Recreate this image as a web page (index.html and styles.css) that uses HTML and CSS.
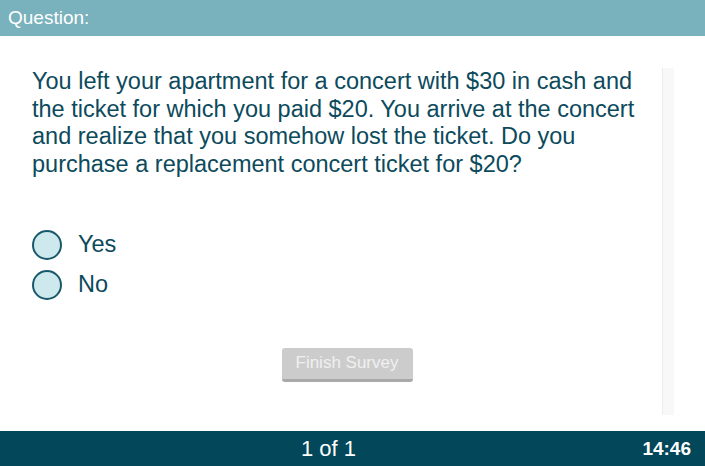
FILE: index.html
```html
<!DOCTYPE html>
<html lang="en">
<head>
<meta charset="UTF-8">
<meta name="viewport" content="width=device-width, initial-scale=1.0">
<title>Survey</title>
<link rel="stylesheet" href="styles.css">
</head>
<body>
	<header class="top-bar">
		<h1>Question:</h1>
	</header>

	<div id="main">
		<div class="content">
			<p class="question">You left your apartment for a concert with $30 in cash and the ticket for which you paid $20. You arrive at the concert and realize that you somehow lost the ticket. Do you purchase a replacement concert ticket for $20?</p>

			<div class="choices">
				<label class="choice">
					<span class="radio"></span>
					<span class="choice-text">Yes</span>
				</label>
				<label class="choice">
					<span class="radio"></span>
					<span class="choice-text">No</span>
				</label>
			</div>

			<div class="actions">
				<button type="button" class="finish" disabled>Finish Survey</button>
			</div>
		</div>
		<div class="scroll-track"></div>
	</div>

	<footer class="bottom-bar">
		<span class="progress">1 of 1</span>
		<span class="clock">14:46</span>
	</footer>
</body>
</html>
```

FILE: styles.css
```css
body {
	font-family: 'Liberation Sans', Arial, Helvetica, sans-serif;
	margin: 0;
	padding: 0;
	background-color: white;
	height: 466px;
	display: flex;
	flex-direction: column;
	overflow: hidden;
}

.top-bar {
	background-color: #79b1bd;
	height: 36px;
	display: flex;
	align-items: center;
	padding: 0 8px;
}

.top-bar h1 {
	margin: 0;
	color: white;
	font-size: 19px;
	font-weight: normal;
}

#main {
	flex: 1;
	display: flex;
	min-height: 0;
}

.content {
	flex: 1;
	padding: 32px 0 0 32px;
}

.question {
	margin: 0;
	width: 615px;
	font-size: 23.5px;
	line-height: 27.7px;
	color: #0c4a5c;
}

.choices {
	margin-top: 46px;
	display: flex;
	flex-direction: column;
}

.choice {
	display: flex;
	align-items: center;
	height: 40px;
	gap: 16px;
}

.radio {
	width: 26px;
	height: 26px;
	border: 2px solid #17586a;
	border-radius: 50%;
	background-color: #cde9ed;
}

.choice-text {
	font-size: 23.5px;
	color: #0c4a5c;
}

.actions {
	margin-top: 43px;
	display: flex;
	justify-content: center;
}

.finish {
	font-family: 'Liberation Sans', Arial, sans-serif;
	background-color: #cccccc;
	color: #f0f0f0;
	border: none;
	border-bottom: 3px solid #a9a9a9;
	border-radius: 3px;
	width: 131px;
	height: 34px;
	font-size: 17px;
	padding: 0;
}

.scroll-track {
	width: 11px;
	margin: 32px 31px 16px 0;
	background-color: #f8f8f8;
	border-left: 1px solid #ededed;
}

.bottom-bar {
	background-color: #02475a;
	height: 35px;
	display: flex;
	align-items: center;
	justify-content: space-between;
	color: white;
	padding: 0 14px 0 0;
}

.progress {
	font-size: 22px;
	margin-left: 301px;
}

.clock {
	font-size: 19px;
	font-weight: bold;
}
```
